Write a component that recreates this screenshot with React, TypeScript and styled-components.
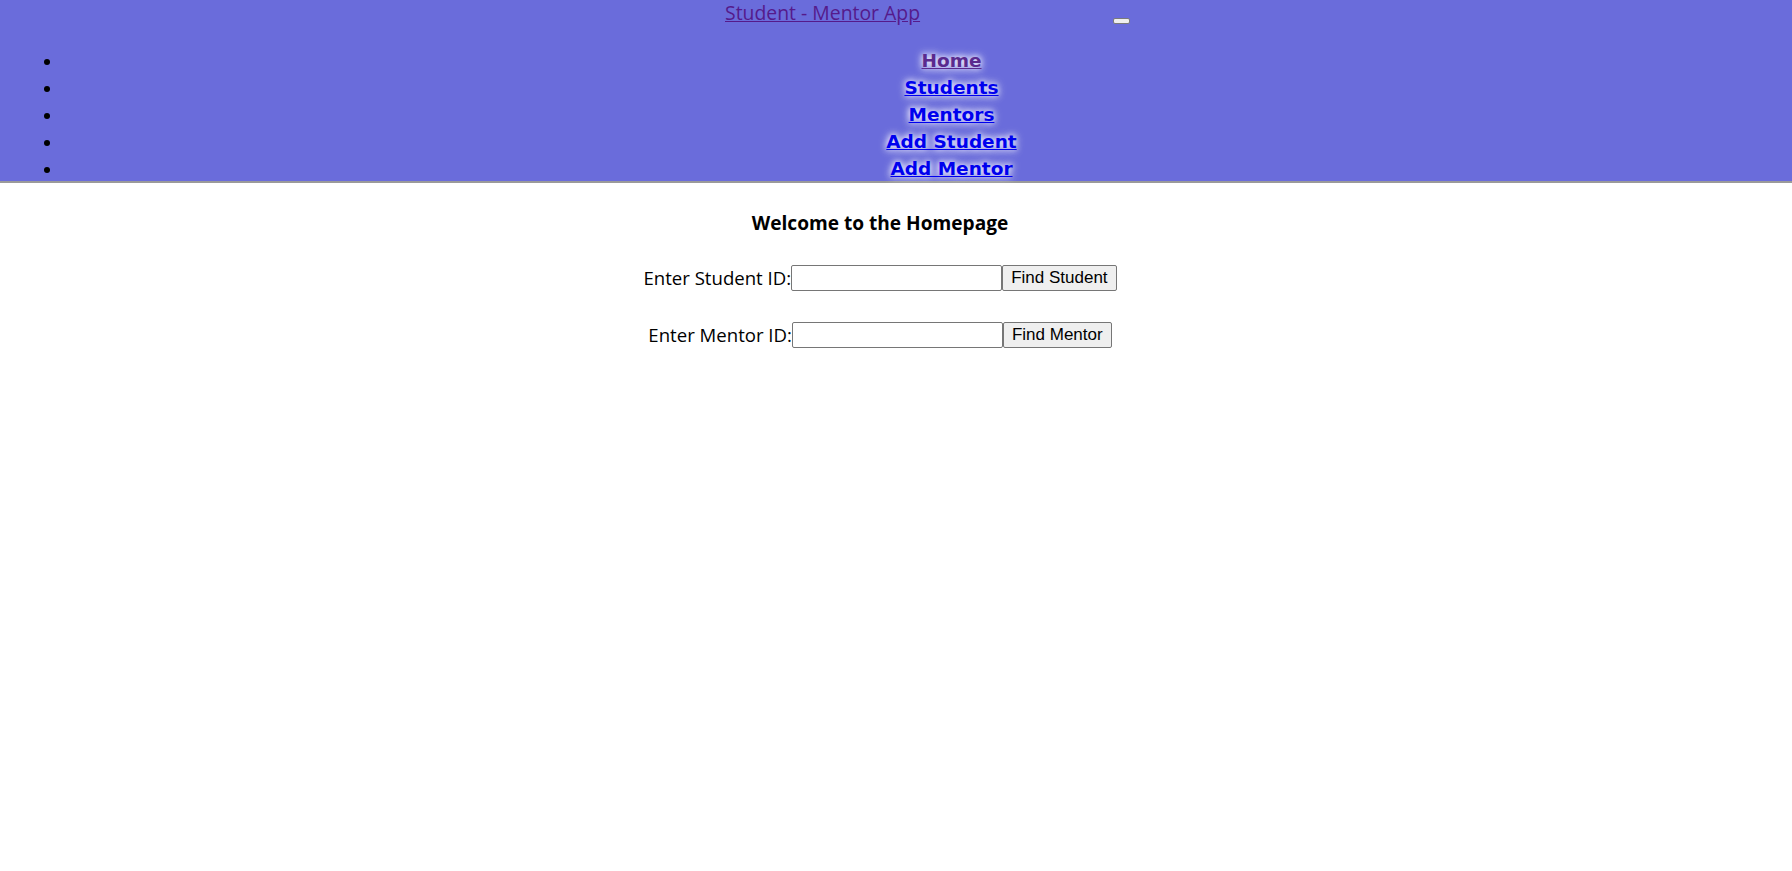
import React from "react";
import styled, { createGlobalStyle } from "styled-components";

const Global = createGlobalStyle`
  html, body { margin: 0; padding: 0; background: #ffffff; }
  body { font-family: "Open Sans", "Noto Sans", sans-serif; color: #000; }
`;

const Header = styled.header`
  background: #6a6cdb;
  border-bottom: 2px solid #9a9a9a;
  height: 181px;
  overflow: visible;
`;

const BrandRow = styled.div`
  display: flex;
  align-items: flex-start;
  height: 30px;
  padding-left: 725px;
`;

const Brand = styled.a`
  font-family: "Open Sans", sans-serif;
  font-size: 19.4px;
  line-height: 26px;
  color: #551a8b;
  text-decoration: underline;
  white-space: nowrap;
`;

const Toggler = styled.button`
  margin: 18px 0 0 193px;
  width: 17px;
  height: 6px;
  padding: 0;
  border: 1px solid #7a7a7a;
  border-radius: 2px;
  background: #efefef;
`;

const NavList = styled.ul`
  margin: 17px 0 0;
  padding: 0 0 0 62px;
  list-style: disc outside;
`;

const NavItem = styled.li`
  text-align: center;
  padding-left: 49px;
  font-family: "DejaVu Sans", sans-serif;
  font-weight: bold;
  font-size: 18.5px;
  line-height: 27px;
`;

const NavLink = styled.a<{ $visited?: boolean }>`
  color: ${(p) => (p.$visited ? "#5a2a8e" : "#0000ee")};
  text-decoration: underline;
  text-shadow: 0 0 6px #ffffff, 0 0 10px #e8e8ff;
`;

const Main = styled.main`
  display: flex;
  flex-direction: column;
  align-items: center;
  padding: 27px 32px 0 0;
`;

const Title = styled.h3`
  margin: 0 0 29px;
  font-family: "Open Sans", sans-serif;
  font-weight: bold;
  font-size: 19.1px;
  line-height: 26px;
`;

const FormRow = styled.div`
  display: flex;
  align-items: center;
  height: 26px;
  margin-bottom: 31px;
`;

const Label = styled.label`
  font-family: "Open Sans", sans-serif;
  font-size: 18.6px;
  line-height: 26px;
`;

const Input = styled.input`
  box-sizing: border-box;
  width: 211px;
  height: 26px;
  border: 1px solid #767676;
  border-radius: 2px;
  padding: 1px 2px;
  background: #fff;
`;

const Button = styled.button`
  box-sizing: border-box;
  height: 26px;
  padding: 0 8px;
  border: 1px solid #767676;
  border-radius: 2px;
  background: #efefef;
  font-family: "Liberation Sans", Arial, sans-serif;
  font-size: 17px;
  color: #000;
`;

const links = ["Home", "Students", "Mentors", "Add Student", "Add Mentor"];

export default function App() {
  return (
    <>
      <Global />
      <Header>
        <BrandRow>
          <Brand href="#">Student - Mentor App</Brand>
          <Toggler aria-label="Toggle navigation" />
        </BrandRow>
        <NavList>
          {links.map((l, i) => (
            <NavItem key={l}>
              <NavLink href="#" $visited={i === 0}>
                {l}
              </NavLink>
            </NavItem>
          ))}
        </NavList>
      </Header>
      <Main>
        <Title>Welcome to the Homepage</Title>
        <FormRow>
          <Label>Enter Student ID:</Label>
          <Input type="text" />
          <Button>Find Student</Button>
        </FormRow>
        <FormRow>
          <Label>Enter Mentor ID:</Label>
          <Input type="text" />
          <Button>Find Mentor</Button>
        </FormRow>
      </Main>
    </>
  );
}
